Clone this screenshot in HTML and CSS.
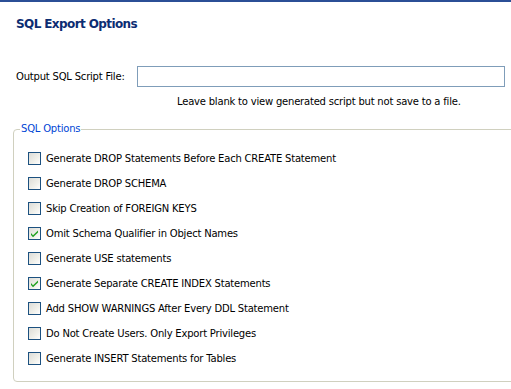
FILE: index.html
```html
<!DOCTYPE html>
<html>
<head>
<meta charset="utf-8">
<link rel="stylesheet" href="styles.css">
</head>
<body>
<div class="page">
  <h1 class="title">SQL Export Options</h1>
  <div class="file-row">
    <label class="file-label">Output SQL Script File:</label>
    <div class="file-input"></div>
  </div>
  <div class="hint">Leave blank to view generated script but not save to a file.</div>
  <fieldset class="group">
    <legend class="legend">SQL Options</legend>
    <div class="options">
      <div class="opt"><span class="cb"></span><span>Generate DROP Statements Before Each CREATE Statement</span></div>
      <div class="opt"><span class="cb"></span><span>Generate DROP SCHEMA</span></div>
      <div class="opt"><span class="cb"></span><span>Skip Creation of FOREIGN KEYS</span></div>
      <div class="opt"><span class="cb checked"><svg viewBox="0 0 13 13" width="13" height="13"><path d="M3 6 L5 8.3 L10 3.5 L10 5.5 L5 10.3 L3 8 Z" fill="#21a121"/></svg></span><span>Omit Schema Qualifier in Object Names</span></div>
      <div class="opt"><span class="cb"></span><span>Generate USE statements</span></div>
      <div class="opt"><span class="cb checked"><svg viewBox="0 0 13 13" width="13" height="13"><path d="M3 6 L5 8.3 L10 3.5 L10 5.5 L5 10.3 L3 8 Z" fill="#21a121"/></svg></span><span>Generate Separate CREATE INDEX Statements</span></div>
      <div class="opt"><span class="cb"></span><span>Add SHOW WARNINGS After Every DDL Statement</span></div>
      <div class="opt"><span class="cb"></span><span>Do Not Create Users. Only Export Privileges</span></div>
      <div class="opt"><span class="cb"></span><span>Generate INSERT Statements for Tables</span></div>
    </div>
  </fieldset>
</div>
</body>
</html>
```
FILE: styles.css
```css
html, body {
  margin: 0;
  padding: 0;
  background: #ffffff;
  overflow: hidden;
}
.page {
  border-top: 2px solid #2b4f96;
  width: 511px;
  height: 387px;
  font-family: "DejaVu Sans", sans-serif;
  font-size: 10px;
  letter-spacing: -0.2px;
  color: #000;
}
.title {
  margin: 0;
  padding: 14px 0 0 16px;
  font-size: 12px;
  font-weight: bold;
  letter-spacing: -0.6px;
  color: #0c2d72;
  line-height: 16px;
}
.file-row {
  display: flex;
  align-items: center;
  margin-top: 34px;
  padding-left: 16px;
}
.file-label {
  width: 121px;
}
.file-input {
  width: 366px;
  height: 19px;
  border: 1px solid #7f9db9;
  background: #fff;
}
.hint {
  padding-left: 177px;
  margin-top: 9px;
  line-height: 12px;
}
.group {
  margin: 15px -20px 0 13px;
  padding: 0;
  border: 1px solid #d0d0bf;
  border-radius: 4px;
  height: 259px;
  box-sizing: border-box;
}
.legend {
  margin-left: 6px;
  padding: 0 1px;
  color: #0046d5;
  line-height: 12px;
}
.options {
  display: flex;
  flex-direction: column;
  gap: 12px;
  padding: 17px 0 0 14px;
}
.opt {
  display: flex;
  align-items: center;
  gap: 5px;
  height: 13px;
}
.cb {
  width: 11px;
  height: 11px;
  border: 1px solid #1c5180;
  background: linear-gradient(135deg, #dcdcd7 0%, #f0f0ea 60%, #ffffff 100%);
  display: block;
  flex: none;
  position: relative;
}
.cb svg {
  position: absolute;
  left: -1px;
  top: -1px;
}
```
